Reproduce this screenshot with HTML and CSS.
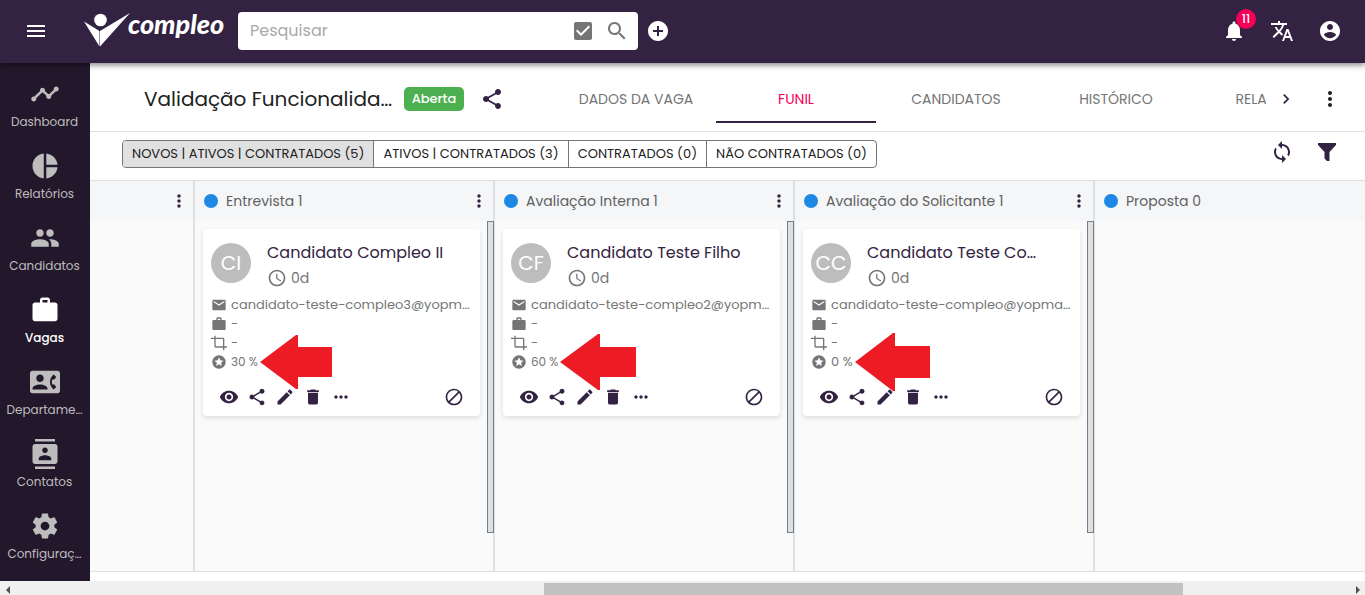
FILE: index.html
```html
<!DOCTYPE html>
<html lang="pt-BR">
<head>
<meta charset="utf-8">
<meta name="viewport" content="width=device-width, initial-scale=1">
<title>Compleo - Funil</title>
<link rel="stylesheet" href="styles.css">
</head>
<body>
<svg class="sprite" aria-hidden="true">
  <symbol id="menu" viewBox="0 0 24 24"><path d="M3 18h18v-2H3v2zm0-5h18v-2H3v2zm0-7v2h18V6H3z"/></symbol>
  <symbol id="checkbox" viewBox="0 0 24 24"><path d="M19 3H5c-1.110 0-2 .9-2 2v14c0 1.100.89 2 2 2h14c1.110 0 2-.9 2-2V5c0-1.100-.89-2-2-2zm-9 14l-5-5 1.410-1.410L10 14.170l7.590-7.590L19 8l-9 9z"/></symbol>
  <symbol id="search" viewBox="0 0 24 24"><path d="M15.500 14h-.79l-.28-.27C15.410 12.590 16 11.110 16 9.500 16 5.910 13.090 3 9.500 3S3 5.910 3 9.500 5.910 16 9.500 16c1.610 0 3.090-.59 4.230-1.570l.27.28v.79l5 4.990L20.490 19l-4.990-5zm-6 0C7.010 14 5 11.990 5 9.500S7.010 5 9.500 5 14 7.010 14 9.500 11.990 14 9.500 14z"/></symbol>
  <symbol id="add" viewBox="0 0 24 24"><path d="M12 2C6.480 2 2 6.480 2 12s4.480 10 10 10 10-4.480 10-10S17.520 2 12 2zm5 11h-4v4h-2v-4H7v-2h4V7h2v4h4v2z"/></symbol>
  <symbol id="bell" viewBox="0 0 24 24"><path d="M12 22c1.100 0 2-.9 2-2h-4c0 1.100.89 2 2 2zm6-6v-5c0-3.070-1.640-5.640-4.500-6.320V4c0-.83-.67-1.500-1.500-1.500s-1.500.67-1.500 1.500v.68C7.630 5.360 6 7.920 6 11v5l-2 2v1h16v-1l-2-2z"/></symbol>
  <symbol id="translate" viewBox="0 0 24 24"><path d="M12.870 15.070l-2.540-2.510.03-.03c1.740-1.940 2.980-4.170 3.710-6.530H17V4h-7V2H8v2H1v1.990h11.170C11.500 7.920 10.440 9.750 9 11.350 8.070 10.320 7.300 9.190 6.690 8h-2c.73 1.630 1.730 3.170 2.980 4.560l-5.090 5.020L4 19l5-5 3.110 3.110.76-2.040zM18.500 10h-2L12 22h2l1.120-3h4.750L21 22h2l-4.500-12zm-2.620 7l1.620-4.330L19.120 17h-3.240z"/></symbol>
  <symbol id="account" viewBox="0 0 24 24"><path d="M12 2C6.480 2 2 6.480 2 12s4.480 10 10 10 10-4.480 10-10S17.520 2 12 2zm0 3c1.660 0 3 1.340 3 3s-1.340 3-3 3-3-1.340-3-3 1.340-3 3-3zm0 14.200c-2.500 0-4.710-1.280-6-3.220.03-1.990 4-3.080 6-3.080 1.990 0 5.970 1.090 6 3.080-1.290 1.940-3.500 3.220-6 3.220z"/></symbol>
  <symbol id="timeline" viewBox="0 0 24 24"><path d="M23 8c0 1.100-.9 2-2 2-.18 0-.35-.02-.51-.07l-3.560 3.550c.05.16.07.34.07.52 0 1.100-.9 2-2 2s-2-.9-2-2c0-.18.02-.36.07-.52l-2.550-2.550c-.16.05-.34.07-.52.07s-.36-.02-.52-.07l-4.550 4.560c.05.16.07.33.07.51 0 1.100-.9 2-2 2s-2-.9-2-2 .9-2 2-2c.18 0 .35.02.51.07l4.560-4.550C8.020 9.360 8 9.180 8 9c0-1.100.9-2 2-2s2 .9 2 2c0 .18-.02.36-.07.52l2.550 2.550c.16-.05.34-.07.52-.07s.36.02.52.07l3.550-3.560C19.020 8.350 19 8.180 19 8c0-1.100.9-2 2-2s2 .9 2 2z"/></symbol>
  <symbol id="pie" viewBox="0 0 24 24"><path d="M11 2v20c-5.070-.5-9-4.790-9-10s3.930-9.500 9-10zm2.030 0v8.990H22c-.47-4.740-4.240-8.520-8.970-8.990zm0 11.010V22c4.740-.47 8.500-4.250 8.970-8.990h-8.970z"/></symbol>
  <symbol id="people" viewBox="0 0 24 24"><path d="M16 11c1.660 0 2.990-1.340 2.990-3S17.660 5 16 5c-1.660 0-3 1.340-3 3s1.340 3 3 3zm-8 0c1.660 0 2.990-1.340 2.990-3S9.660 5 8 5C6.340 5 5 6.340 5 8s1.340 3 3 3zm0 2c-2.330 0-7 1.170-7 3.500V19h14v-2.500c0-2.330-4.670-3.500-7-3.500zm8 0c-.29 0-.62.02-.97.05 1.160.84 1.970 1.970 1.970 3.450V19h6v-2.500c0-2.330-4.670-3.500-7-3.500z"/></symbol>
  <symbol id="work" viewBox="0 0 24 24"><path d="M20 6h-4V4c0-1.110-.89-2-2-2h-4c-1.110 0-2 .89-2 2v2H4c-1.110 0-1.990.89-1.990 2L2 19c0 1.110.89 2 2 2h16c1.110 0 2-.89 2-2V8c0-1.110-.89-2-2-2zm-6 0h-4V4h4v2z"/></symbol>
  <symbol id="contact-phone" viewBox="0 0 24 24"><path d="M22 3H2C.9 3 0 3.900 0 5v14c0 1.100.9 2 2 2h20c1.100 0 1.990-.9 1.990-2L24 5c0-1.100-.9-2-2-2zM8 6c1.660 0 3 1.340 3 3s-1.340 3-3 3-3-1.340-3-3 1.340-3 3-3zm6 12H2v-1c0-2 4-3.100 6-3.100s6 1.100 6 3.100v1zm3.850-4h1.640L21 16l-1.990 1.990c-1.310-.98-2.280-2.380-2.730-3.990-.18-.64-.28-1.310-.28-2s.1-1.360.28-2c.45-1.620 1.420-3.010 2.730-3.990L21 8l-1.510 2h-1.640c-.22.63-.35 1.300-.35 2s.13 1.370.35 2z"/></symbol>
  <symbol id="contacts" viewBox="0 0 24 24"><path d="M20 0H4v2h16V0zM4 24h16v-2H4v2zM20 4H4c-1.100 0-2 .9-2 2v12c0 1.100.9 2 2 2h16c1.100 0 2-.9 2-2V6c0-1.100-.9-2-2-2zm-8 2.750c1.240 0 2.250 1.010 2.250 2.250s-1.010 2.250-2.250 2.250S9.750 10.240 9.750 9 10.760 6.750 12 6.750zM17 17H7v-1.500c0-1.670 3.330-2.500 5-2.500s5 .83 5 2.500V17z"/></symbol>
  <symbol id="settings" viewBox="0 0 24 24"><path d="M19.430 12.980c.04-.32.07-.64.07-.98s-.03-.66-.07-.98l2.110-1.650c.19-.15.24-.42.12-.64l-2-3.460c-.12-.22-.39-.3-.61-.22l-2.490 1c-.52-.4-1.080-.73-1.690-.98l-.38-2.650C14.460 2.180 14.250 2 14 2h-4c-.25 0-.46.18-.49.42l-.38 2.650c-.61.25-1.170.59-1.690.98l-2.490-1c-.23-.09-.49 0-.61.22l-2 3.460c-.13.22-.07.49.12.64l2.110 1.650c-.04.32-.07.65-.07.98s.03.66.07.98l-2.110 1.650c-.19.15-.24.42-.12.64l2 3.460c.12.22.39.3.61.22l2.490-1c.52.4 1.080.73 1.690.98l.38 2.650c.03.24.24.42.49.42h4c.25 0 .46-.18.49-.42l.38-2.650c.61-.25 1.170-.59 1.690-.98l2.490 1c.23.09.49 0 .61-.22l2-3.460c.12-.22.07-.49-.12-.64l-2.110-1.650zM12 15.500c-1.930 0-3.500-1.570-3.500-3.500s1.570-3.500 3.500-3.500 3.500 1.570 3.500 3.500-1.570 3.500-3.500 3.500z"/></symbol>
  <symbol id="share" viewBox="0 0 24 24"><path d="M18 16.080c-.76 0-1.440.3-1.960.77L8.910 12.700c.05-.23.09-.46.09-.7s-.04-.47-.09-.7l7.050-4.110c.54.5 1.250.81 2.040.81 1.660 0 3-1.340 3-3s-1.340-3-3-3-3 1.340-3 3c0 .24.04.47.09.7L8.040 9.810C7.500 9.310 6.790 9 6 9c-1.660 0-3 1.340-3 3s1.340 3 3 3c.79 0 1.500-.31 2.040-.81l7.120 4.160c-.05.21-.08.43-.08.65 0 1.610 1.310 2.920 2.920 2.920s2.920-1.310 2.920-2.920-1.310-2.920-2.920-2.920z"/></symbol>
  <symbol id="chevron" viewBox="0 0 24 24"><path d="M10 6L8.590 7.410 13.170 12l-4.580 4.590L10 18l6-6z"/></symbol>
  <symbol id="more-vert" viewBox="0 0 24 24"><path d="M12 8c1.100 0 2-.9 2-2s-.9-2-2-2-2 .9-2 2 .9 2 2 2zm0 2c-1.100 0-2 .9-2 2s.9 2 2 2 2-.9 2-2-.9-2-2-2zm0 6c-1.100 0-2 .9-2 2s.9 2 2 2 2-.9 2-2-.9-2-2-2z"/></symbol>
  <symbol id="more-horiz" viewBox="0 0 24 24"><path d="M6 10c-1.100 0-2 .9-2 2s.9 2 2 2 2-.9 2-2-.9-2-2-2zm12 0c-1.100 0-2 .9-2 2s.9 2 2 2 2-.9 2-2-.9-2-2-2zm-6 0c-1.100 0-2 .9-2 2s.9 2 2 2 2-.9 2-2-.9-2-2-2z"/></symbol>
  <symbol id="sync" viewBox="0 0 24 24"><path d="M12 4V1L8 5l4 4V6c3.310 0 6 2.690 6 6 0 1.010-.25 1.970-.7 2.800l1.460 1.460C19.540 15.030 20 13.570 20 12c0-4.420-3.580-8-8-8zm0 14c-3.310 0-6-2.690-6-6 0-1.010.25-1.970.7-2.800L5.240 7.740C4.460 8.970 4 10.430 4 12c0 4.420 3.580 8 8 8v3l4-4-4-4v3z"/></symbol>
  <symbol id="funnel" viewBox="0 0 24 24"><path d="M3 3h18v2l-6.500 7v9h-2.500l-2.500-2.500V12L3 5z"/></symbol>
  <symbol id="clock" viewBox="0 0 24 24"><path d="M11.990 2C6.470 2 2 6.480 2 12s4.470 10 9.990 10C17.520 22 22 17.520 22 12S17.520 2 11.990 2zM12 20c-4.420 0-8-3.580-8-8s3.580-8 8-8 8 3.580 8 8-3.580 8-8 8zm.5-13H11v6l5.250 3.150.75-1.230-4.500-2.670z"/></symbol>
  <symbol id="mail" viewBox="0 0 24 24"><path d="M20 4H4c-1.100 0-1.990.9-1.990 2L2 18c0 1.100.9 2 2 2h16c1.100 0 2-.9 2-2V6c0-1.100-.9-2-2-2zm0 4l-8 5-8-5V6l8 5 8-5v2z"/></symbol>
  <symbol id="crop" viewBox="0 0 24 24"><path d="M0 4h5V1h2v3h11c1.100 0 2 .9 2 2v11h4v2h-4v4h-2v-4H7c-1.100 0-2-.9-2-2V6H0zm7 2v11h11V6z"/></symbol>
  <symbol id="stars" viewBox="0 0 24 24"><path d="M11.990 2C6.470 2 2 6.480 2 12s4.470 10 9.990 10C17.520 22 22 17.520 22 12S17.520 2 11.990 2zm4.240 16L12 15.450 7.770 18l1.120-4.810-3.730-3.230 4.920-.42L12 5l1.920 4.530 4.920.42-3.730 3.230L16.230 18z"/></symbol>
  <symbol id="eye" viewBox="0 0 24 24"><path d="M12 4.500C7 4.500 2.730 7.610 1 12c1.730 4.390 6 7.500 11 7.500s9.270-3.110 11-7.500c-1.730-4.390-6-7.500-11-7.500zM12 17c-2.760 0-5-2.240-5-5s2.240-5 5-5 5 2.240 5 5-2.240 5-5 5zm0-8c-1.660 0-3 1.340-3 3s1.340 3 3 3 3-1.340 3-3-1.340-3-3-3z"/></symbol>
  <symbol id="edit" viewBox="0 0 24 24"><path d="M3 17.250V21h3.750L17.810 9.940l-3.750-3.750L3 17.250zM20.710 7.040c.39-.39.39-1.020 0-1.410l-2.340-2.340c-.39-.39-1.020-.39-1.410 0l-1.830 1.830 3.750 3.750 1.830-1.830z"/></symbol>
  <symbol id="trash" viewBox="0 0 24 24"><path d="M6 19c0 1.100.9 2 2 2h8c1.100 0 2-.9 2-2V7H6v12zM19 4h-3.500l-1-1h-5l-1 1H5v2h14V4z"/></symbol>
  <symbol id="block" viewBox="0 0 24 24"><path d="M12 2C6.480 2 2 6.480 2 12s4.480 10 10 10 10-4.480 10-10S17.520 2 12 2zM4 12c0-4.420 3.580-8 8-8 1.850 0 3.550.63 4.900 1.690L5.690 16.900C4.630 15.550 4 13.850 4 12zm8 8c-1.850 0-3.550-.63-4.900-1.690L18.310 7.100C19.370 8.450 20 10.150 20 12c0 4.420-3.580 8-8 8z"/></symbol>
</svg>

<header class="topbar">
  <button class="icon-btn" aria-label="Menu"><svg class="i24"><use href="#menu"/></svg></button>
  <a class="logo" href="#">
    <svg class="logo-mark" viewBox="0 0 46 34"><circle cx="16.500" cy="7" r="6.300"/><path d="M0 8.500L15.500 18v15.500z"/><path d="M16 18L46 0 16 33.500z"/></svg>
    <span class="logo-text">compleo</span>
  </a>
  <form class="search">
    <input class="search-input" type="text" placeholder="Pesquisar" aria-label="Pesquisar">
    <button class="icon-btn" type="button" aria-label="Selecionar"><svg class="i24"><use href="#checkbox"/></svg></button>
    <button class="icon-btn" type="button" aria-label="Buscar"><svg class="i24"><use href="#search"/></svg></button>
  </form>
  <button class="icon-btn" aria-label="Adicionar"><svg class="i24"><use href="#add"/></svg></button>
  <div class="top-actions">
    <button class="icon-btn bell" aria-label="Notificações"><svg class="i24"><use href="#bell"/></svg><span class="count">11</span></button>
    <button class="icon-btn" aria-label="Idioma"><svg class="i24"><use href="#translate"/></svg></button>
    <button class="icon-btn" aria-label="Conta"><svg class="i24"><use href="#account"/></svg></button>
  </div>
</header>

<div class="shell">
  <nav class="sidebar">
    <a class="nav-item" href="#"><svg class="i30"><use href="#timeline"/></svg><span>Dashboard</span></a>
    <a class="nav-item" href="#"><svg class="i30"><use href="#pie"/></svg><span>Relatórios</span></a>
    <a class="nav-item" href="#"><svg class="i30"><use href="#people"/></svg><span>Candidatos</span></a>
    <a class="nav-item active" href="#"><svg class="i30"><use href="#work"/></svg><span>Vagas</span></a>
    <a class="nav-item" href="#"><svg class="i30"><use href="#contact-phone"/></svg><span>Departame…</span></a>
    <a class="nav-item" href="#"><svg class="i30"><use href="#contacts"/></svg><span>Contatos</span></a>
    <a class="nav-item" href="#"><svg class="i30"><use href="#settings"/></svg><span>Configuraç…</span></a>
  </nav>

  <main class="main">
    <div class="jobbar">
      <h1 class="job-title">Validação Funcionalida…</h1>
      <span class="status">Aberta</span>
      <button class="icon-btn" aria-label="Compartilhar"><svg class="i24"><use href="#share"/></svg></button>
      <div class="tabs" role="tablist">
        <button class="tab" role="tab">DADOS DA VAGA</button>
        <button class="tab selected" role="tab" aria-selected="true">FUNIL</button>
        <button class="tab" role="tab">CANDIDATOS</button>
        <button class="tab" role="tab">HISTÓRICO</button>
        <button class="tab" role="tab">RELATÓRIOS</button>
      </div>
      <button class="icon-btn next" aria-label="Próximas abas"><svg class="i20"><use href="#chevron"/></svg></button>
      <button class="icon-btn job-more" aria-label="Mais opções"><svg class="i24"><use href="#more-vert"/></svg></button>
    </div>

    <div class="filterbar">
      <div class="toggle-group">
        <button class="toggle on">NOVOS | ATIVOS | CONTRATADOS (5)</button>
        <button class="toggle">ATIVOS | CONTRATADOS (3)</button>
        <button class="toggle">CONTRATADOS (0)</button>
        <button class="toggle">NÃO CONTRATADOS (0)</button>
      </div>
      <div class="filter-actions">
        <button class="icon-btn" aria-label="Atualizar"><svg class="i24"><use href="#sync"/></svg></button>
        <button class="icon-btn" aria-label="Filtrar"><svg class="i24"><use href="#funnel"/></svg></button>
      </div>
    </div>

    <div class="board">
      <section class="column first">
        <header class="col-head"><button class="icon-btn" aria-label="Opções da etapa"><svg class="i20"><use href="#more-vert"/></svg></button></header>
      </section>

      <section class="column">
        <header class="col-head"><span class="dot"></span><h2>Entrevista 1</h2><button class="icon-btn" aria-label="Opções da etapa"><svg class="i20"><use href="#more-vert"/></svg></button></header>
        <div class="col-body">
          <article class="card">
            <div class="person"><span class="avatar">CI</span><div class="who"><h3>Candidato Compleo II</h3><p><svg class="i20"><use href="#clock"/></svg>0d</p></div></div>
            <ul class="facts">
              <li><svg class="i16"><use href="#mail"/></svg><span>candidato-teste-compleo3@yopm…</span></li>
              <li><svg class="i16"><use href="#work"/></svg><span>-</span></li>
              <li><svg class="i16"><use href="#crop"/></svg><span>-</span></li>
              <li class="score"><svg class="i16"><use href="#stars"/></svg><span>30 %</span></li>
            </ul>
            <div class="actions">
              <button class="icon-btn" aria-label="Ver"><svg class="i20"><use href="#eye"/></svg></button>
              <button class="icon-btn" aria-label="Compartilhar"><svg class="i20"><use href="#share"/></svg></button>
              <button class="icon-btn" aria-label="Editar"><svg class="i20"><use href="#edit"/></svg></button>
              <button class="icon-btn" aria-label="Excluir"><svg class="i20"><use href="#trash"/></svg></button>
              <button class="icon-btn" aria-label="Mais"><svg class="i20"><use href="#more-horiz"/></svg></button>
              <button class="icon-btn reject" aria-label="Reprovar"><svg class="i20"><use href="#block"/></svg></button>
            </div>
            <svg class="pointer pointer-a" viewBox="0 0 72 54"><path d="M0 27L36 0h2v12h34v30H38v12h-2z"/></svg>
          </article>
          <div class="scroller"></div>
        </div>
      </section>

      <section class="column">
        <header class="col-head"><span class="dot"></span><h2>Avaliação Interna 1</h2><button class="icon-btn" aria-label="Opções da etapa"><svg class="i20"><use href="#more-vert"/></svg></button></header>
        <div class="col-body">
          <article class="card">
            <div class="person"><span class="avatar">CF</span><div class="who"><h3>Candidato Teste Filho</h3><p><svg class="i20"><use href="#clock"/></svg>0d</p></div></div>
            <ul class="facts">
              <li><svg class="i16"><use href="#mail"/></svg><span>candidato-teste-compleo2@yopm…</span></li>
              <li><svg class="i16"><use href="#work"/></svg><span>-</span></li>
              <li><svg class="i16"><use href="#crop"/></svg><span>-</span></li>
              <li class="score"><svg class="i16"><use href="#stars"/></svg><span>60 %</span></li>
            </ul>
            <div class="actions">
              <button class="icon-btn" aria-label="Ver"><svg class="i20"><use href="#eye"/></svg></button>
              <button class="icon-btn" aria-label="Compartilhar"><svg class="i20"><use href="#share"/></svg></button>
              <button class="icon-btn" aria-label="Editar"><svg class="i20"><use href="#edit"/></svg></button>
              <button class="icon-btn" aria-label="Excluir"><svg class="i20"><use href="#trash"/></svg></button>
              <button class="icon-btn" aria-label="Mais"><svg class="i20"><use href="#more-horiz"/></svg></button>
              <button class="icon-btn reject" aria-label="Reprovar"><svg class="i20"><use href="#block"/></svg></button>
            </div>
            <svg class="pointer pointer-b" viewBox="0 0 76 56"><path d="M0 28L38 0h2v13h36v30H40v13h-2z"/></svg>
          </article>
          <div class="scroller"></div>
        </div>
      </section>

      <section class="column">
        <header class="col-head"><span class="dot"></span><h2>Avaliação do Solicitante 1</h2><button class="icon-btn" aria-label="Opções da etapa"><svg class="i20"><use href="#more-vert"/></svg></button></header>
        <div class="col-body">
          <article class="card">
            <div class="person"><span class="avatar">CC</span><div class="who"><h3>Candidato Teste Co…</h3><p><svg class="i20"><use href="#clock"/></svg>0d</p></div></div>
            <ul class="facts">
              <li><svg class="i16"><use href="#mail"/></svg><span>candidato-teste-compleo@yopma…</span></li>
              <li><svg class="i16"><use href="#work"/></svg><span>-</span></li>
              <li><svg class="i16"><use href="#crop"/></svg><span>-</span></li>
              <li><svg class="i16"><use href="#stars"/></svg><span>0 %</span></li>
            </ul>
            <div class="actions">
              <button class="icon-btn" aria-label="Ver"><svg class="i20"><use href="#eye"/></svg></button>
              <button class="icon-btn" aria-label="Compartilhar"><svg class="i20"><use href="#share"/></svg></button>
              <button class="icon-btn" aria-label="Editar"><svg class="i20"><use href="#edit"/></svg></button>
              <button class="icon-btn" aria-label="Excluir"><svg class="i20"><use href="#trash"/></svg></button>
              <button class="icon-btn" aria-label="Mais"><svg class="i20"><use href="#more-horiz"/></svg></button>
              <button class="icon-btn reject" aria-label="Reprovar"><svg class="i20"><use href="#block"/></svg></button>
            </div>
            <svg class="pointer pointer-c" viewBox="0 0 75 58"><path d="M0 29L38 0h2v13h35v32H40v13h-2z"/></svg>
          </article>
          <div class="scroller"></div>
        </div>
      </section>

      <section class="column last">
        <header class="col-head"><span class="dot"></span><h2>Proposta 0</h2></header>
      </section>
    </div>
  </main>
</div>

<div class="hscroll" aria-hidden="true">
  <svg class="hs-arrow" viewBox="0 0 14 14"><path d="M10 5v8L6 9z"/></svg>
  <div class="hs-before"></div><div class="hs-thumb"></div><div class="hs-after"></div>
  <svg class="hs-arrow" viewBox="0 0 14 14"><path d="M5 5v8l4-4z"/></svg>
</div>
</body>
</html>
```

FILE: styles.css
```css
* { box-sizing: border-box; }

body {
  margin: 0;
  height: 100vh;
  display: flex;
  flex-direction: column;
  overflow: hidden;
  background: #fff;
  color: #212121;
  font-family: Poppins, Inter, "Open Sans", sans-serif;
  font-size: 14px;
}

h1, h2, h3, p, ul { margin: 0; padding: 0; font-weight: 400; }
ul { list-style: none; }
a { color: inherit; text-decoration: none; }
button { font: inherit; color: inherit; background: none; border: 0; padding: 0; margin: 0; }
svg { display: block; fill: currentColor; flex: none; }

.sprite { display: none; }
.i16 { width: 16px; height: 16px; }
.i20 { width: 20px; height: 20px; }
.i24 { width: 24px; height: 24px; }
.i30 { width: 30px; height: 30px; }
.icon-btn { display: flex; align-items: center; justify-content: center; flex: none; }

/* Top bar */
.topbar {
  display: flex;
  align-items: center;
  flex: none;
  height: 63px;
  padding: 0 23px 1px 24px;
  background: #332242;
  color: #fff;
  box-shadow: 0 2px 6px rgba(0, 0, 0, .5);
  position: relative;
  z-index: 2;
}
.logo { display: flex; width: 138px; margin: 0 16px 2px 36px; }
.logo-mark { width: 46px; height: 34px; }
.logo-text {
  margin-left: -2px;
  font: italic 900 27px/22px Lato, sans-serif;
}
.search {
  display: flex;
  align-items: center;
  flex: none;
  width: 400px;
  height: 38px;
  gap: 10px;
  margin-right: 8px;
  padding: 0 9px 0 12px;
  border-radius: 4px;
  background: #fff;
  color: #757575;
}
.search-input {
  flex: 1;
  min-width: 0;
  padding: 0 0 2px;
  border: 0;
  outline: 0;
  font: inherit;
  font-size: 16px;
  color: #212121;
}
.search-input::placeholder { color: #a9a9a9; opacity: 1; }
.top-actions { display: flex; gap: 24px; margin-left: auto; }
.bell { position: relative; }
.count {
  position: absolute;
  top: -10px;
  left: 14px;
  width: 20px;
  height: 20px;
  border-radius: 50%;
  background: #f50057;
  font-size: 12px;
  font-weight: 500;
  line-height: 20px;
  text-align: center;
}

/* Shell */
.shell { display: flex; flex: 1; min-height: 0; }
.sidebar {
  display: flex;
  flex-direction: column;
  flex: none;
  width: 90px;
  padding-top: 16px;
  overflow: hidden;
  background: #23172c;
  color: #bdbdbd;
}
.nav-item {
  display: flex;
  flex-direction: column;
  align-items: center;
  flex: none;
  gap: 3px;
  height: 72px;
  padding-right: 1px;
  font-size: 12px;
  line-height: 20px;
  white-space: nowrap;
}
.nav-item.active { color: #fff; font-weight: 500; }
.main { display: flex; flex-direction: column; flex: 1; min-width: 0; padding-bottom: 9px; }

/* Job header */
.jobbar {
  display: flex;
  align-items: center;
  flex: none;
  height: 69px;
  padding: 0 23px 0 54px;
  border-bottom: 1px solid #e0e0e0;
}
.job-title { width: 248px; margin: 4px 12px 0 0; font-size: 20px; line-height: 28px; white-space: nowrap; }
.status {
  width: 60px;
  height: 24px;
  margin: 4px 16px 0 0;
  border-radius: 5px;
  background: #4caf50;
  color: #fff;
  font-size: 13px;
  font-weight: 500;
  line-height: 24px;
  text-align: center;
}
.jobbar .icon-btn { margin-top: 4px; color: #332242; }
.tabs {
  display: flex;
  align-self: flex-end;
  flex: 1;
  min-width: 0;
  height: 60px;
  margin: 0 10px 8px 52px;
  overflow: hidden;
}
.tab {
  flex: 0 0 160px;
  padding: 18px 0 3px;
  border-bottom: 2px solid transparent;
  color: #757575;
}
.tab.selected { color: #f50057; border-color: #332242; }
.jobbar .job-more { margin-left: 22px; color: #212121; }

/* Filters */
.filterbar {
  display: flex;
  align-items: flex-start;
  justify-content: space-between;
  flex: none;
  height: 49px;
  padding: 8px 26px 0 32px;
  border-bottom: 1px solid #e0e0e0;
}
.toggle-group { display: flex; border: 1px solid #757575; border-radius: 4px; overflow: hidden; }
.toggle { height: 26px; padding: 0 9px; font-size: 13px; white-space: nowrap; }
.toggle + .toggle { border-left: 1px solid #757575; }
.toggle.on { background: #e0e0e0; }
.filter-actions { display: flex; gap: 21px; color: #332242; }

/* Board */
.board { display: flex; flex: 1; min-height: 0; overflow: hidden; border-bottom: 1px solid #e0e0e0; background: #fafafa; }
.column { display: flex; flex-direction: column; flex: 0 0 300px; border-right: 2px solid #e0e0e0; }
.column.first { flex-basis: 105px; }
.column.last { flex: 1 0 270px; border-right: 0; }
.col-head {
  display: flex;
  align-items: center;
  flex: none;
  height: 40px;
  padding: 0 4px 0 9px;
  background: #f4f6f8;
  color: #616161;
}
.col-head h2 { font-size: 14px; line-height: 20px; }
.col-head .icon-btn { margin-left: auto; color: #332242; }
.dot { width: 14px; height: 14px; margin-right: 8px; border-radius: 50%; background: #1e88e5; }
.col-body { display: flex; flex: 1; align-items: flex-start; justify-content: space-between; min-height: 0; }
.scroller { width: 7px; height: 89%; margin-right: -1px; border: 1px solid #708090; background: #e0e0e0; }

/* Candidate card */
.card {
  position: relative;
  width: 277px;
  margin: 8px 0 0 8px;
  padding: 12px 8px 9px;
  border-radius: 4px;
  background: #fff;
  color: #757575;
  box-shadow: 0 2px 5px rgba(0, 0, 0, .12);
}
.person { display: flex; gap: 16px; height: 52px; }
.avatar {
  width: 40px;
  height: 40px;
  margin-top: 2px;
  border-radius: 50%;
  background: #bdbdbd;
  color: #fff;
  font-size: 20px;
  line-height: 40px;
  text-align: center;
}
.who h3 { color: #332242; font-size: 16px; line-height: 24px; white-space: nowrap; }
.who p { display: flex; align-items: center; gap: 4px; line-height: 26px; }
.facts { margin-top: 2px; font-size: 13px; }
.facts li { display: flex; align-items: center; gap: 4px; height: 19px; white-space: nowrap; }
.facts .score { font-size: 12px; }
.actions { display: flex; gap: 8px; margin-top: 16px; padding: 0 8px; color: #332242; }
.actions .reject { margin-left: auto; }

/* Red callouts over the score line */
.pointer { position: absolute; fill: #ed1c24; }
.pointer-a { left: 57px; top: 106px; width: 72px; height: 54px; }
.pointer-b { left: 57px; top: 105px; width: 76px; height: 56px; }
.pointer-c { left: 52px; top: 104px; width: 75px; height: 58px; }

/* Horizontal scroll bar */
.hscroll { display: flex; flex: none; height: 14px; background: #f0f0f0; color: #505050; }
.hs-arrow { width: 14px; height: 14px; }
.hs-before { flex: 530; }
.hs-thumb { flex: 639; margin-top: 2px; background: #c1c1c1; }
.hs-after { flex: 168; }
```
